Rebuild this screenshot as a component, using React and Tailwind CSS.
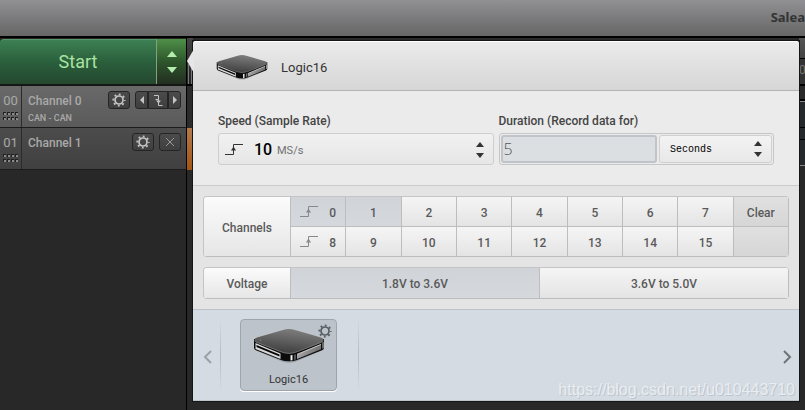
import { useState } from 'react'

const channels = [0, 1, 2, 3, 4, 5, 6, 7, 8, 9, 10, 11, 12, 13, 14, 15]

const voltages = ['1.8V to 3.6V', '3.6V to 5.0V']

function Gear({ className }) {
  return (
    <svg viewBox="0 0 14 14" className={className} fill="none" stroke="currentColor" aria-hidden="true">
      <circle cx="7" cy="7" r="4" strokeWidth="1.7" />
      <circle cx="7" cy="7" r="5.7" strokeWidth="1.8" strokeDasharray="1.9 2.577" strokeDashoffset="0.95" />
    </svg>
  )
}

function EdgeIcon({ className }) {
  return (
    <svg viewBox="0 0 18 11" className={className} fill="none" stroke="currentColor" aria-hidden="true">
      <path d="M0 10.5H8.5V0.5H18" />
      <path d="M8.5 2.5L11 6.5H6Z" fill="currentColor" stroke="none" />
    </svg>
  )
}

function Stepper({ className }) {
  return (
    <svg viewBox="0 0 8 16" className={className} fill="currentColor" aria-hidden="true">
      <path d="M4 0L8 5H0Z" />
      <path d="M0 11H8L4 16Z" />
    </svg>
  )
}

function Device({ id, className }) {
  return (
    <svg viewBox="0 0 72 35" className={className} aria-hidden="true">
      <defs>
        <linearGradient id={`${id}-top`} x1="0.7" y1="0" x2="0.4" y2="1">
          <stop offset="0" stopColor="#808080" />
          <stop offset="0.5" stopColor="#5f5f5f" />
          <stop offset="1" stopColor="#3d3d3d" />
        </linearGradient>
        <linearGradient id={`${id}-side`} x1="0" x2="1">
          <stop offset="0" stopColor="#a4a4a4" />
          <stop offset="1" stopColor="#707070" />
        </linearGradient>
      </defs>
      <path d="M2 22L30 34Q36 35.5 42 34L70 22L60 20H12Z" fill="#000" opacity="0.18" />
      {/* body */}
      <path d="M1 11V20Q1 21.500 3 22.300L28 32Q31 33.300 36 33.300T44 32L69 22.300Q71 21.500 71 20V11Z" fill="#0c0c0c" />
      {/* left face with the connector slots */}
      <path d="M2.500 15L27.500 25.500V31L2.500 21Z" fill="#d8d8d8" />
      <path d="M3.500 17L26.500 26.600V28.600L3.500 19Z" fill="#050505" />
      {/* right face */}
      <path d="M44 26L68 16V21.300L44 31Z" fill={`url(#${id}-side)`} />
      <path d="M44 26L68 16V17L44 27Z" fill="#c4c4c4" />
      <path d="M69.500 14.500L70.500 14V20L69.500 20.700Z" fill="#c8c8c8" />
      <path d="M37.500 27.300L39.500 27V32.300L37.500 32.600Z" fill="#f0f0f0" />
      <path d="M41.500 26.700L42.500 26.300V31.500L41.500 32Z" fill="#999" />
      {/* top plate */}
      <path
        d="M30 2Q36 0 42 2L68 9.500Q73 11.500 68 14.500L44 23.800Q36 27 28 23.800L4 14.500Q-1 11.500 4 9.500Z"
        fill={`url(#${id}-top)`}
      />
      <path
        d="M1.500 12.600Q2 13.700 4 14.500L28 23.800Q36 27 44 23.800L68 14.500Q70 13.700 70.500 12.600"
        fill="none"
        stroke="#a0a0a0"
        strokeWidth="0.6"
      />
      <circle cx="7.500" cy="12" r="0.600" fill="#999" />
    </svg>
  )
}

const darkButton =
  'flex h-[18px] items-center justify-center border border-[#252525] bg-linear-to-b from-[#4b4b4b] to-[#3f3f3f] text-[#c4c4c4]'

function ChannelRow({ number, name, analyzer, className, children }) {
  return (
    <li className={`flex h-[42px] border-b border-[#1c1c1c] bg-linear-to-b text-[#a9a9a9] ${className}`}>
      <div className="flex w-[22px] flex-col items-center border-r border-[#2b2b2b] pt-[7px]">
        <span className="text-[13px] leading-4">{number}</span>
        <svg viewBox="0 0 16 8" className="mt-[3px] h-2 w-4" aria-hidden="true">
          {[0, 4, 8, 12].map((x) => (
            <g key={x}>
              <rect x={x} y="0" width="3" height="3" fill="#1f1f1f" />
              <rect x={x + 1} y="1" width="2" height="2" fill="#8a8a8a" />
              <rect x={x} y="5" width="3" height="3" fill="#1f1f1f" />
              <rect x={x + 1} y="6" width="2" height="2" fill="#8a8a8a" />
            </g>
          ))}
        </svg>
      </div>
      <div className="flex-1 pt-[7px] pl-1.5">
        <div className="text-xs leading-4 font-medium">{name}</div>
        {analyzer && <div className="mt-[3px] text-[9px] leading-3 font-medium">{analyzer}</div>}
      </div>
      <div className="flex gap-[5px] pt-[5px] pr-[5px]">{children}</div>
    </li>
  )
}

function Sidebar() {
  return (
    <aside className="w-[187px] shrink-0 border-r border-black font-[Roboto,sans-serif]">
      <div className="flex h-12 border-b-2 border-[#161616] pt-px">
        <button
          type="button"
          className="flex-1 rounded-tl-sm border-t border-[#55986a] bg-linear-to-b from-[#3d8053] via-[#2a5f3c] to-[#24482f] text-lg text-[#a9e3a0]"
        >
          Start
        </button>
        <button
          type="button"
          aria-label="Capture settings"
          className="flex w-[30px] items-center justify-center border-l border-[#83a080] bg-linear-to-b from-[#4f9049] via-[#2e562b] to-[#222e20] text-[#b4ecae]"
        >
          <svg viewBox="0 0 10 22" className="h-[22px] w-2.5" fill="currentColor" aria-hidden="true">
            <path d="M5 0L10 6H0Z" />
            <path d="M0 16H10L5 22Z" />
          </svg>
        </button>
      </div>
      <ul>
        <ChannelRow number="00" name="Channel 0" analyzer="CAN - CAN" className="from-[#696969] to-[#5a5a5a]">
          <button type="button" aria-label="Channel 0 settings" className={`${darkButton} w-[22px] rounded-[3px]`}>
            <Gear className="size-3.5" />
          </button>
          <div className="flex">
            <button type="button" aria-label="Previous edge" className={`${darkButton} w-[13px] rounded-l-[3px]`}>
              <svg viewBox="0 0 4 8" className="h-2 w-1" fill="currentColor" aria-hidden="true">
                <path d="M4 0V8L0 4Z" />
              </svg>
            </button>
            <button type="button" aria-label="Trigger" className={`${darkButton} w-5`}>
              <svg viewBox="0 0 10 12" className="h-3 w-2.5" fill="none" stroke="currentColor" aria-hidden="true">
                <path d="M1 1.500H5.500V11.500H9.500M2.500 5.500H5.500" />
                <path d="M3 6.500H8L5.500 9.500Z" fill="currentColor" stroke="none" />
              </svg>
            </button>
            <button type="button" aria-label="Next edge" className={`${darkButton} w-[13px] rounded-r-[3px]`}>
              <svg viewBox="0 0 4 8" className="h-2 w-1" fill="currentColor" aria-hidden="true">
                <path d="M0 0V8L4 4Z" />
              </svg>
            </button>
          </div>
        </ChannelRow>
        <ChannelRow number="01" name="Channel 1" className="from-[#4c4c4c] to-[#404040]">
          <button type="button" aria-label="Channel 1 settings" className={`${darkButton} w-[22px] rounded-[3px]`}>
            <Gear className="size-3.5" />
          </button>
          <button type="button" aria-label="Remove trigger" className={`${darkButton} w-[22px] rounded-[3px]`}>
            <svg viewBox="0 0 10 10" className="size-2.5" stroke="#999" aria-hidden="true">
              <path d="M1 1L9 9M9 1L1 9" />
            </svg>
          </button>
        </ChannelRow>
      </ul>
    </aside>
  )
}

function SampleSettings() {
  return (
    <section className="grid grid-cols-2 gap-[5px] border-b border-[#cbcbcb] bg-[#ebebeb] px-[25px] pt-[22px] pb-5">
      <div>
        <label htmlFor="speed" className="block text-xs leading-4 font-medium text-[#444]">
          Speed (Sample Rate)
        </label>
        <div className="mt-1 flex h-8 items-center rounded-[3px] border border-[#cfcfcf] bg-linear-to-b from-[#f1f1f1] to-[#e6e6e6] pt-px pr-[9px] pl-1.5">
          <EdgeIcon className="h-[11px] w-[18px] text-[#333]" />
          <select id="speed" className="ml-[11px] appearance-none text-base font-medium text-black">
            <option>10</option>
          </select>
          <span className="ml-1 flex-1 pt-1 text-[11px] text-[#707070]">MS/s</span>
          <Stepper className="h-4 w-2 text-[#333]" />
        </div>
      </div>
      <div>
        <label htmlFor="duration" className="block text-xs leading-4 font-medium text-[#444]">
          Duration (Record data for)
        </label>
        <div className="mt-1 flex h-8 gap-0.5 rounded-[3px] border border-[#c6c6c6] p-px">
          <input
            id="duration"
            type="text"
            defaultValue="5"
            className="w-0 flex-1 rounded-[3px] border-2 border-[#bfc4ca] bg-[#dcdfe2] px-px font-[Open_Sans,sans-serif] text-base leading-6 font-light text-[#555]"
          />
          <div className="flex w-[113px] items-center rounded-[3px] border border-[#d0d0d0] bg-linear-to-b from-[#f3f3f3] to-[#e8e8e8] pr-[9px] pl-2.5">
            <select
              aria-label="Duration unit"
              className="w-0 flex-1 appearance-none font-[Liberation_Mono,monospace] text-[10px] text-black"
            >
              <option>Seconds</option>
            </select>
            <Stepper className="h-4 w-2 text-[#333]" />
          </div>
        </div>
      </div>
    </section>
  )
}

const cell = 'border-r border-b border-[#bdbdbd] bg-linear-to-b pt-0.5'
const raised = 'from-[#f5f5f5] to-[#e4e4e4]'
const pressed = 'from-[#d0d4d9] to-[#d5d9de]'
const heading = 'flex w-[87px] items-center justify-center from-[#fbfbfb] to-[#e6e6e6]'

function ChannelSettings() {
  const [active, setActive] = useState([0, 1])
  const [voltage, setVoltage] = useState(voltages[0])

  const toggle = (ch) => setActive(active.includes(ch) ? active.filter((c) => c !== ch) : [...active, ch])

  const channelButton = (ch) => (
    <button
      key={ch}
      type="button"
      aria-pressed={active.includes(ch)}
      onClick={() => toggle(ch)}
      className={`${cell} ${active.includes(ch) ? pressed : raised} flex h-[30px] items-center justify-center`}
    >
      {ch % 8 === 0 && <EdgeIcon className="mr-[11px] mb-0.5 h-[11px] w-[18px] text-[#888]" />}
      {ch}
    </button>
  )

  return (
    <section className="bg-[#e4e4e4] p-2.5 text-xs font-medium text-[#5a5a5a]">
      <div className="flex overflow-hidden rounded-[4px] border-t border-l border-[#c4c4c4]">
        <div className={`${cell} ${heading}`}>Channels</div>
        <div className="grid flex-1 grid-cols-9">
          {channels.slice(0, 8).map(channelButton)}
          <button type="button" onClick={() => setActive([])} className={`${cell} h-[30px] from-[#e0e0e0] to-[#d6d6d6]`}>
            Clear
          </button>
          {channels.slice(8).map(channelButton)}
          <div className={`${cell} h-[30px] from-[#e0e0e0] to-[#d6d6d6]`} />
        </div>
      </div>
      <div className="mt-2.5 flex h-8 overflow-hidden rounded-[4px] border-t border-l border-[#c4c4c4]">
        <div className={`${cell} ${heading}`}>Voltage</div>
        {voltages.map((v) => (
          <button
            key={v}
            type="button"
            aria-pressed={voltage === v}
            onClick={() => setVoltage(v)}
            className={`${cell} ${voltage === v ? pressed : raised} flex-1`}
          >
            {v}
          </button>
        ))}
      </div>
    </section>
  )
}

function DeviceTray() {
  return (
    <section className="relative flex h-[92px] items-center border-y border-[#bcc3cb] bg-[#d4dbe3] px-2.5">
      <button type="button" aria-label="Previous device" className="pt-1 text-[#9ba1a8]">
        <svg viewBox="0 0 9 14" className="h-3.5 w-[9px]" fill="none" stroke="currentColor" strokeWidth="2" aria-hidden="true">
          <path d="M8 1L2 7L8 13" />
        </svg>
      </button>
      <div className="ml-2 h-[74px] w-px bg-linear-to-b from-transparent via-[#b3bbc8] to-transparent" />
      <button
        type="button"
        className="relative ml-[19px] flex h-[72px] w-[97px] flex-col items-center rounded-[4px] border border-[#9da5ae] bg-[#bcc3cb] pt-2 text-[11px] text-[#333] shadow-[0_1px_0_#fff]"
      >
        <Device id="tray" className="h-[35px] w-[72px]" />
        <span className="mt-[9px] leading-4">Logic16</span>
        <Gear className="absolute top-1 right-1 size-3.5 text-[#5a5e63]" />
      </button>
      <div className="ml-[21px] h-[74px] w-px bg-linear-to-b from-transparent via-[#b3bbc8] to-transparent" />
      <button type="button" aria-label="Next device" className="-mr-[3px] ml-auto pt-1 text-[#6f7379]">
        <svg viewBox="0 0 9 14" className="h-3.5 w-[9px]" fill="none" stroke="currentColor" strokeWidth="2" aria-hidden="true">
          <path d="M1 1L7 7L1 13" />
        </svg>
      </button>
      <span className="absolute right-1 bottom-0 font-[Liberation_Sans,sans-serif] text-base leading-5 text-[#e9edf1] text-shadow-[1px_1px_0_#bfc5cc]">
        https://blog.csdn.net/u010443710
      </span>
    </section>
  )
}

export default function App() {
  return (
    <div className="flex min-h-screen flex-col bg-[#282828]">
      <header className="flex h-[38px] items-center justify-end overflow-hidden border-b-2 border-black bg-linear-to-b from-[#919195] to-[#666] pb-px font-[Noto_Sans,sans-serif] text-[13px] font-bold text-[#333]">
        <h1>Salea</h1>
      </header>
      <main className="flex flex-1">
        <Sidebar />
        {/* start of the timeline, seen beside the popup */}
        <div className="w-1.5 shrink-0">
          <div className="flex h-12 items-end justify-center border-b-2 border-black bg-linear-to-b from-[#444] to-[#222]">
            <div className="h-5 w-1 border-x border-[#777]" />
          </div>
          <div className="h-[42px] bg-[#2b2b2b]" />
          <div className="h-[42px] bg-linear-to-b from-[#b57a4b] to-[#a35410]" />
        </div>
        <div className="relative mt-[3px] min-w-0 flex-1 self-start font-[Roboto,sans-serif] shadow-[0_0_0_1px_#151515]">
          <svg viewBox="0 0 7 24" className="absolute top-2 -left-1.5 h-6 w-[7px]" fill="#e6e6e6" aria-hidden="true">
            <path d="M7 0V24L0 12Z" />
          </svg>
          <div className="flex h-[50px] items-center gap-[13px] rounded-t-[3px] border-b border-[#b4b4b4] bg-linear-to-b from-[#ebebeb] to-[#d6d6d6] px-[23px] pt-0.5 text-[13px] text-[#333] shadow-[inset_0_1px_0_#fff]">
            <Device id="title" className="h-[26px] w-[52px]" />
            <h2 className="pt-0.5">Logic16</h2>
          </div>
          <SampleSettings />
          <ChannelSettings />
          <DeviceTray />
        </div>
        <div className="w-1.5 shrink-0 overflow-hidden">
          <div className="h-[21px] border-b border-black bg-linear-to-b from-[#555] to-[#444]" />
          <div className="h-[27px] overflow-hidden border-b-2 border-black bg-[#333] pt-[3px] font-[Roboto,sans-serif] text-xs text-[#777]">0</div>
          <div className="h-[15px] border-b-2 border-black bg-[#2a2a2a]" />
          <div className="h-[27px] border-t border-b border-t-[#888] border-b-black bg-[#25292b]" />
          <div className="h-3 border-b border-black bg-[#25292b]" />
          <div className="h-[26px] border-b border-[#888] bg-[#25292b]" />
        </div>
      </main>
    </div>
  )
}
